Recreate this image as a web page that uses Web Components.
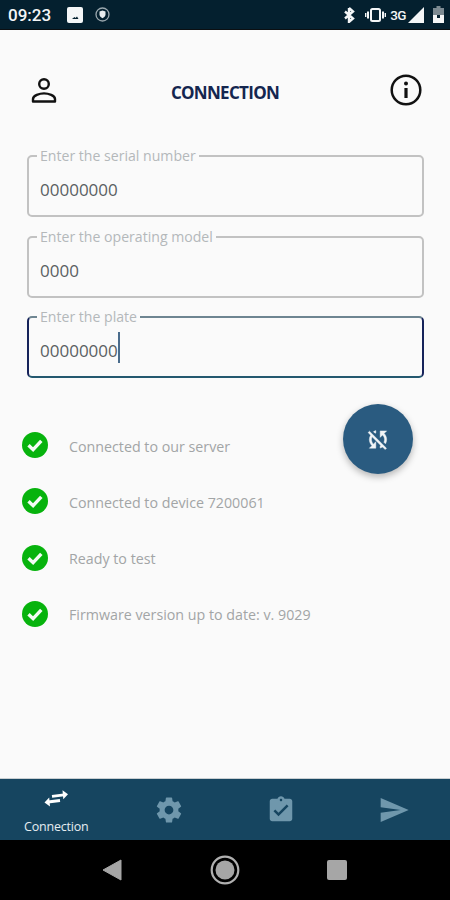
<!DOCTYPE html>
<html>
<head>
<meta charset="utf-8">
<title>Connection</title>
<style>
  html, body { margin: 0; padding: 0; }
  body { width: 450px; height: 900px; overflow: hidden; background: #fafafa; font-family: "Open Sans", "Noto Sans", sans-serif; }
  #app { display: flex; flex-direction: column; height: 900px; }
</style>
</head>
<body>
<div id="app">
  <status-bar></status-bar>
  <connection-screen>
    <app-header title="CONNECTION"></app-header>
    <outlined-field label="Enter the serial number" value="00000000"></outlined-field>
    <outlined-field label="Enter the operating model" value="0000"></outlined-field>
    <outlined-field label="Enter the plate" value="00000000" focused></outlined-field>
    <status-list>
      <status-row>Connected to our server</status-row>
      <status-row>Connected to device 7200061</status-row>
      <status-row>Ready to test</status-row>
      <status-row>Firmware version up to date: v. 9029</status-row>
    </status-list>
    <sync-fab></sync-fab>
  </connection-screen>
  <bottom-nav></bottom-nav>
  <system-nav></system-nav>
</div>

<script>
class StatusBar extends HTMLElement {
  constructor() {
    super();
    this.attachShadow({ mode: "open" });
  }

  connectedCallback() {
    this.shadowRoot.innerHTML = `
      <style>
        :host { display: flex; align-items: center; height: 29px; flex: none; background: #04202f; border-bottom: 1px solid #0b0f12; color: #f4f6f7; padding: 0 6px 0 8px; font-family: "Roboto", sans-serif; }
        .time { font-size: 17px; font-weight: 500; width: 59px; }
        .left, .right { display: flex; align-items: center; }
        .right { margin-left: auto; }
        .g3 { font-size: 13.500px; font-weight: 500; letter-spacing: -0.5px; margin: 0 2px 0 4px; }
        svg { display: block; }
      </style>
      <div class="left">
        <span class="time">09:23</span>
        <svg width="16" height="16" viewBox="0 0 16 16"><rect width="16" height="16" y="0" rx="2" fill="#f4f6f7"/><path d="M5 12h6.500l-1.500-2.500-1.500 1.500-1-1z" fill="#04202f"/></svg>
        <svg style="margin-left:12px" width="15" height="15" viewBox="0 0 15 15"><circle cx="7.500" cy="7.500" r="6.500" fill="none" stroke="#9aa7ae" stroke-width="1.300"/><path d="M4.500 4.500l3-1 3 1v3c0 2-1.500 3-3 3.700-1.500-.7-3-1.700-3-3.700z" fill="#e8ecee"/></svg>
      </div>
      <div class="right">
        <svg width="12" height="16" viewBox="0 0 12 16"><path d="M6 1v14l4-3.500L2 4.500M6 1l4 3.500L2 11.500" fill="none" stroke="#f4f6f7" stroke-width="2.400"/></svg>
        <svg style="margin-left:10px" width="21" height="14" viewBox="0 0 21 14"><rect x="6" y="1" width="9" height="12" rx="1.500" fill="none" stroke="#f4f6f7" stroke-width="2"/><path d="M3 3.500v7M18 3.500v7" stroke="#f4f6f7" stroke-width="2"/><path d="M0.700 5v4M20.300 5v4" stroke="#f4f6f7" stroke-width="1.400"/></svg>
        <span class="g3">3G</span>
        <svg width="16" height="16" viewBox="0 0 16 16"><path d="M0 16L16 0v16z" fill="#f4f6f7"/></svg>
        <svg style="margin-left:9px" width="11" height="17" viewBox="0 0 11 17"><path d="M3.500 0h4v2H11v15H0V2h3.500z" fill="#7c8a92"/><path d="M0 9h11v8H0z" fill="#f4f6f7"/><path d="M4 9h3v3H4z" fill="#04202f"/></svg>
      </div>
    `;
  }
}

class ConnectionScreen extends HTMLElement {
  constructor() {
    super();
    this.attachShadow({ mode: "open" });
    this.shadowRoot.innerHTML = `
      <style>
        :host { display: flex; flex-direction: column; flex: 1; position: relative; background: #fafafa; padding: 0 26px 0 27px; min-height: 0; }
      </style>
      <slot></slot>
    `;
  }
}

class AppHeader extends HTMLElement {
  constructor() {
    super();
    this.attachShadow({ mode: "open" });
  }

  connectedCallback() {
    this.shadowRoot.innerHTML = `
      <style>
        :host { display: flex; align-items: center; justify-content: space-between; height: 118px; margin: 0 1px 0 0; padding-top: 2px; box-sizing: border-box; }
        h1 { margin: 5px 0 0 0; font-size: 17px; font-weight: 700; color: #14264f; letter-spacing: -0.7px; }
        svg { display: block; }
      </style>
      <svg width="34" height="34" viewBox="0 0 34 34"><circle cx="17" cy="11" r="4.800" fill="none" stroke="#111" stroke-width="2.400"/><path d="M6 28.500v-2.500c0-3.300 6.500-5.600 11-5.600s11 2.300 11 5.600v2.500z" fill="none" stroke="#111" stroke-width="2.400" stroke-linejoin="round"/></svg>
      <h1>${this.getAttribute("title")}</h1>
      <svg width="34" height="34" viewBox="0 0 34 34"><circle cx="17" cy="17" r="14.300" fill="none" stroke="#111" stroke-width="2.500"/><path d="M17 15v10" stroke="#111" stroke-width="3.200"/><circle cx="17" cy="10.500" r="2" fill="#111"/></svg>
    `;
  }
}

class OutlinedField extends HTMLElement {
  constructor() {
    super();
    this.attachShadow({ mode: "open" });
  }

  connectedCallback() {
    const focused = this.hasAttribute("focused");
    this.shadowRoot.innerHTML = `
      <style>
        :host { display: block; height: 80.500px; }
        fieldset { margin: 0; padding: 0 0 0 11px; height: 69px; box-sizing: border-box; border: 2px solid #c2c2c2; border-radius: 5px; min-width: 0; }
        fieldset.on { border-color: #16235a; border-top-color: #6e8591; border-bottom-color: #23586f; }
        legend { margin-left: -3px; padding: 0 3px; font-size: 14.100px; line-height: 16px; color: #b4b8ba; }
        .value { display: flex; align-items: center; height: 51px; font-size: 17px; color: #5a5f62; }
        .caret { width: 2px; height: 31px; margin-top: -6px; background: #4a6c8c; }
      </style>
      <fieldset class="${focused ? "on" : ""}">
        <legend>${this.getAttribute("label")}</legend>
        <div class="value"><span>${this.getAttribute("value")}</span>${focused ? '<span class="caret"></span>' : ""}</div>
      </fieldset>
    `;
  }
}

class StatusList extends HTMLElement {
  constructor() {
    super();
    this.attachShadow({ mode: "open" });
    this.shadowRoot.innerHTML = `
      <style>
        :host { display: flex; flex-direction: column; gap: 30.300px; margin: 43.500px 0 0 -5px; }
      </style>
      <slot></slot>
    `;
  }
}

class StatusRow extends HTMLElement {
  constructor() {
    super();
    this.attachShadow({ mode: "open" });
    this.shadowRoot.innerHTML = `
      <style>
        :host { display: flex; align-items: center; gap: 21px; height: 26px; font-size: 14.250px; color: #a2a5a6; }
        svg { display: block; flex: none; margin-bottom: 2px; }
      </style>
      <svg width="26" height="26" viewBox="0 0 26 26"><circle cx="13" cy="13" r="13" fill="#07b30d"/><path d="M6.500 13.300l4.600 4.400 8.200-8.800" fill="none" stroke="#f4fbf4" stroke-width="3.400"/></svg>
      <span><slot></slot></span>
    `;
  }
}

class SyncFab extends HTMLElement {
  constructor() {
    super();
    this.attachShadow({ mode: "open" });
    this.shadowRoot.innerHTML = `
      <style>
        :host { position: absolute; left: 343px; top: 374px; width: 70px; height: 70px; border-radius: 50%; background: #2a5b80; box-shadow: 0 3px 7px rgba(0,0,0,0.28); display: flex; align-items: center; justify-content: center; }
        svg { display: block; }
      </style>
      <svg width="26" height="26" viewBox="0 0 24 24"><path fill="#f2f5f7" stroke="#f2f5f7" stroke-width="0.400" d="M10 6.350V4.260c-.8.210-1.550.540-2.230.960l1.460 1.460c.250-.120.500-.240.770-.330zm-7.140-.250l2.360 2.360C4.450 9.670 4 11.050 4 12.500c0 2.210.910 4.200 2.360 5.640L4 20.500h6v-6l-2.240 2.240C6.680 15.650 6 14.160 6 12.500c0-.900.200-1.760.560-2.530l8.060 8.060c-.2.100-.410.190-.620.260v2.090c.800-.210 1.550-.540 2.230-.960l2.360 2.360 1.270-1.270L4.140 4.820 2.860 6.100zM20 4.500h-6v6l2.240-2.240C17.320 9.350 18 10.840 18 12.500c0 .900-.200 1.760-.560 2.530l1.460 1.460c.700-1.160 1.100-2.530 1.100-3.990 0-2.210-.910-4.200-2.360-5.640L20 4.500z"/></svg>
    `;
  }
}

class BottomNav extends HTMLElement {
  constructor() {
    super();
    this.attachShadow({ mode: "open" });
  }

  connectedCallback() {
    const dim = "#6f97ac";
    this.shadowRoot.innerHTML = `
      <style>
        :host { display: grid; grid-template-columns: repeat(4, 1fr); height: 62px; flex: none; box-sizing: border-box; background: #164560; border-top: 1px solid #c9cfd2; font-family: "Open Sans", sans-serif; }
        .tab { display: flex; flex-direction: column; align-items: center; justify-content: center; }
        .tab.active { justify-content: flex-start; padding-top: 9px; }
        .tab.active span { font-size: 12.500px; line-height: 16px; margin-top: 9px; color: #e6edf1; letter-spacing: -0.200px; }
        svg { display: block; }
      </style>
      <div class="tab active">
        <svg width="26" height="22" viewBox="0 0 26 22"><path fill="none" stroke="#fff" stroke-width="2.800" d="M9 8.300l12-1.500M17 12.500l-12 1.500"/><path fill="#fff" d="M25 6.300l-5.500-4 .8 9zM1.500 14.500l5.500 4-.8-9z"/></svg>
        <span>Connection</span>
      </div>
      <div class="tab">
        <svg width="30" height="30" viewBox="0 0 24 24"><path fill="${dim}" d="M19.430 12.980c.040-.320.070-.640.070-.980s-.030-.660-.070-.980l2.110-1.650c.190-.150.240-.420.120-.640l-2-3.460c-.120-.220-.390-.300-.610-.220l-2.490 1c-.520-.400-1.080-.730-1.690-.980l-.380-2.650C14.460 2.180 14.250 2 14 2h-4c-.250 0-.460.180-.490.420l-.380 2.650c-.610.250-1.170.590-1.690.980l-2.490-1c-.230-.090-.490 0-.610.220l-2 3.460c-.130.220-.070.490.120.640l2.110 1.650c-.040.320-.070.650-.070.980s.030.660.070.980l-2.110 1.650c-.190.150-.240.420-.120.640l2 3.460c.120.220.390.300.610.220l2.490-1c.520.400 1.080.730 1.690.980l.380 2.650c.030.240.240.420.490.420h4c.250 0 .460-.180.490-.420l.380-2.650c.610-.250 1.170-.590 1.690-.980l2.490 1c.230.090.490 0 .610-.220l2-3.460c.120-.220.070-.490-.120-.640l-2.110-1.650zM12 15.500c-1.930 0-3.500-1.570-3.500-3.500s1.570-3.500 3.500-3.500 3.500 1.570 3.500 3.500-1.570 3.500-3.500 3.500z"/></svg>
      </div>
      <div class="tab">
        <svg width="30" height="30" viewBox="0 0 24 24"><path fill="${dim}" d="M19 3h-4.180C14.400 1.840 13.300 1 12 1c-1.300 0-2.400.840-2.820 2H5c-1.100 0-2 .900-2 2v14c0 1.100.900 2 2 2h14c1.100 0 2-.900 2-2V5c0-1.100-.900-2-2-2zm-7 0c.550 0 1 .450 1 1s-.450 1-1 1-1-.450-1-1 .450-1 1-1zm-2 14l-4-4 1.410-1.410L10 14.170l6.590-6.590L18 9l-8 8z"/></svg>
      </div>
      <div class="tab">
        <svg width="32" height="32" viewBox="0 0 24 24"><path fill="${dim}" d="M2.010 21L23 12 2.010 3 2 10l15 2-15 2z"/></svg>
      </div>
    `;
  }
}

class SystemNav extends HTMLElement {
  constructor() {
    super();
    this.attachShadow({ mode: "open" });
    this.shadowRoot.innerHTML = `
      <style>
        :host { display: grid; grid-template-columns: 102px 20px 88px 30px 87px 20px; height: 60px; flex: none; background: #000; align-items: center; justify-items: start; }
        svg { display: block; }
        .back { grid-column: 2; }
        .home { grid-column: 4; }
        .recent { grid-column: 6; }
      </style>
      <svg class="back" width="20" height="22" viewBox="0 0 20 22"><path d="M19 1v20L1 11z" fill="#a6a6a6" stroke="#a6a6a6" stroke-linejoin="round"/></svg>
      <svg class="home" width="30" height="30" viewBox="0 0 30 30"><circle cx="15" cy="15" r="13.300" fill="none" stroke="#b0b0b0" stroke-width="2.200"/><circle cx="15" cy="15" r="9.500" fill="#a6a6a6"/></svg>
      <svg class="recent" width="20" height="20" viewBox="0 0 20 20"><rect width="20" height="20" rx="2" fill="#a6a6a6"/></svg>
    `;
  }
}

customElements.define("status-bar", StatusBar);
customElements.define("connection-screen", ConnectionScreen);
customElements.define("app-header", AppHeader);
customElements.define("outlined-field", OutlinedField);
customElements.define("status-list", StatusList);
customElements.define("status-row", StatusRow);
customElements.define("sync-fab", SyncFab);
customElements.define("bottom-nav", BottomNav);
customElements.define("system-nav", SystemNav);
</script>
</body>
</html>
